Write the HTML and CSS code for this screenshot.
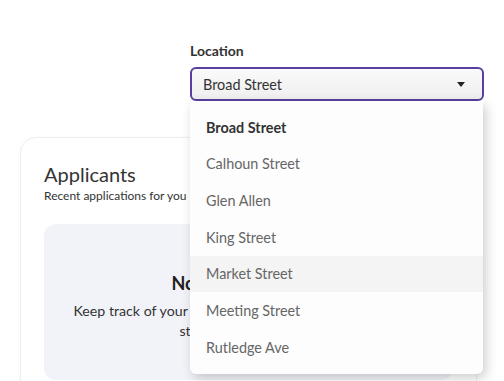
FILE: index.html
```html
<!DOCTYPE html>
<html>
<head>
<meta charset="utf-8">
<link rel="stylesheet" href="styles.css">
</head>
<body>
<div class="page">
  <div class="field-row">
    <div class="field">
      <div class="label">Location</div>
      <div class="select">
        <span>Broad Street</span>
        <span class="caret"></span>
      </div>
      <ul class="menu">
        <li class="item selected">Broad Street</li>
        <li class="item">Calhoun Street</li>
        <li class="item">Glen Allen</li>
        <li class="item">King Street</li>
        <li class="item hover">Market Street</li>
        <li class="item">Meeting Street</li>
        <li class="item">Rutledge Ave</li>
      </ul>
    </div>
  </div>
  <div class="card">
    <h2 class="card-title">Applicants</h2>
    <p class="card-sub">Recent applications for you</p>
    <div class="empty">
      <div class="empty-title">No applications yet</div>
      <div class="empty-text">Keep track of your applicants here. New applications will<br>start showing up here.</div>
    </div>
  </div>
</div>
</body>
</html>
```
FILE: styles.css
```css
* { box-sizing: border-box; }
html, body { margin: 0; padding: 0; background: #fff; }
body { font-family: Lato, "Open Sans", sans-serif; color: #333; }
.page { padding-top: 42px; }
.field-row { display: flex; justify-content: flex-end; padding-right: 20px; }
.field { position: relative; width: 294px; z-index: 2; }
.label { font-size: 14px; font-weight: 700; line-height: 18px; color: #333; margin-bottom: 7px; }
.select {
  height: 34px;
  border: 2px solid #5a3f9e;
  border-radius: 6px;
  background: linear-gradient(#fafafa, #efefef);
  display: flex; align-items: center; justify-content: space-between;
  padding: 0 17px 0 11px;
  font-size: 14.4px; color: #333;
}
.caret { width: 0; height: 0; border-left: 4px solid transparent; border-right: 4px solid transparent; border-top: 5px solid #222; }
.menu {
  position: absolute; left: 0; top: 59px; width: 293px;
  margin: 0; padding: 8px 0; list-style: none;
  background: #fdfdfd;
  border-radius: 0 0 6px 6px;
  box-shadow: 3px 4px 12px rgba(0,0,0,0.2);
}
.item { height: 36.67px; display: flex; align-items: center; padding-left: 16px; font-size: 14.4px; color: #666; }
.item.selected { font-weight: 700; color: #333; }
.item.hover { background: #f4f4f4; }
.card {
  margin: 36px 0 0 20px; width: 457px; height: 260px;
  background: #fff; border: 1px solid #efefef; border-radius: 16px;
  box-shadow: 0 1px 4px rgba(0,0,0,0.04);
  padding: 22px 23px 0;
}
.card-title { margin: 0; font-size: 20px; font-weight: 400; line-height: 28px; color: #333; }
.card-sub { margin: 0; font-size: 12px; line-height: 16px; color: #333; }
.empty {
  margin-top: 20px; height: 156px; background: #f2f3f8; border-radius: 12px;
  text-align: center; padding: 47px 4px 0;
}
.empty-title { font-size: 18px; font-weight: 700; line-height: 24px; color: #222; }
.empty-text { font-size: 14.2px; line-height: 20px; margin-top: 6px; color: #333; white-space: nowrap; }
```
